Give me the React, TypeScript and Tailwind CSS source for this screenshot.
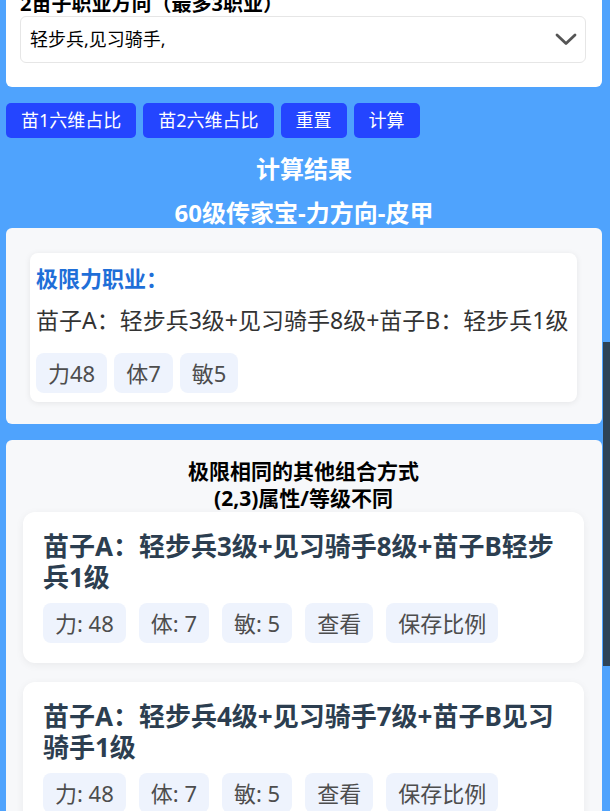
import React from "react";

const font = { fontFamily: '"Noto Sans", "Noto Sans CJK SC", sans-serif' };

const results = [
  { title: "苗子A：轻步兵3级+见习骑手8级+苗子B轻步兵1级", stats: ["力: 48", "体: 7", "敏: 5"] },
  { title: "苗子A：轻步兵4级+见习骑手7级+苗子B见习骑手1级", stats: ["力: 48", "体: 7", "敏: 5"] },
];

function Chip({ children }: { children: React.ReactNode }) {
  return (
    <span className="h-[40px] px-[12px] flex items-center rounded-lg bg-[#eef3fd] text-[22px] text-[#4d4d4d]">
      {children}
    </span>
  );
}

export default function App() {
  return (
    <div style={font} className="relative h-[811px] overflow-hidden bg-[#4fa3fd] pl-[6px] pr-[8px]">
      {/* 职业选择 */}
      <div className="-mt-[30px] pt-[22px] pb-[24px] pl-[14px] pr-[16px] bg-white rounded-b-md">
        <h3 className="text-[20px] leading-[24px] font-bold text-black">2苗子职业方向（最多3职业）</h3>
        <div className="h-[47px] flex items-center justify-between pl-[9px] pr-[8px] border border-[#e6e6e6] rounded-md">
          <span className="text-[18px] text-black">轻步兵,见习骑手,</span>
          <svg width="22" height="13" viewBox="0 0 22 13" fill="none">
            <polyline points="2,2 11,10.5 20,2" stroke="#555" strokeWidth="2.8" strokeLinecap="round" strokeLinejoin="round" />
          </svg>
        </div>
      </div>

      <div className="mt-[16px] flex gap-[7px]">
        {["苗1六维占比", "苗2六维占比", "重置", "计算"].map(b => (
          <button key={b} className="h-[35px] px-[15px] rounded-[5px] bg-[#2445ff] text-white text-[18px]">
            {b}
          </button>
        ))}
      </div>

      <h2 className="mt-[16px] text-center text-white font-bold text-[24px] leading-[30px]">计算结果</h2>
      <h2 className="mt-[14px] text-center text-white font-bold text-[24px] leading-[30px]">60级传家宝-力方向-皮甲</h2>

      {/* 极限 */}
      <div className="bg-[#f7f8fa] rounded-md pt-[25px] pb-[22px] pl-[24px] pr-[25px]">
        <div className="bg-white rounded-lg shadow-[0_1px_6px_rgba(0,0,0,0.08)] pt-[10px] pb-[9px] px-[6px]">
          <div className="text-[22px] leading-[30px] font-bold text-[#1f6fd8]">极限力职业：</div>
          <div className="mt-[12px] text-[23px] leading-[30px] text-[#333] whitespace-nowrap">
            苗子A：轻步兵3级+见习骑手8级+苗子B：轻步兵1级
          </div>
          <div className="mt-[18px] flex gap-[7px]">
            <Chip>力48</Chip>
            <Chip>体7</Chip>
            <Chip>敏5</Chip>
          </div>
        </div>
      </div>

      {/* 其他组合 */}
      <div className="mt-[16px] bg-[#f7f8fa] rounded-md pt-[18px] pl-[17px] pr-[18px]">
        <h4 className="text-center text-black font-bold text-[21px] leading-[27px]">
          极限相同的其他组合方式
          <br />
          (2,3)属性/等级不同
        </h4>
        <div className="flex flex-col gap-[19px]">
          {results.map((r, i) => (
            <div key={i} className="bg-white rounded-xl shadow-[0_2px_8px_rgba(0,0,0,0.06)] px-[20px] pt-[19px] pb-[20px]">
              <div className="text-[26px] leading-[31px] font-bold text-[#2c3e50]">{r.title}</div>
              <div className="mt-[10px] flex gap-[13px]">
                {r.stats.map(s => (
                  <Chip key={s}>{s}</Chip>
                ))}
                <Chip>查看</Chip>
                <Chip>保存比例</Chip>
              </div>
            </div>
          ))}
        </div>
      </div>

      {/* scrollbar thumb */}
      <div className="absolute right-0 top-[342px] w-[7px] h-[324px] bg-[#2e4356]" />
    </div>
  );
}
